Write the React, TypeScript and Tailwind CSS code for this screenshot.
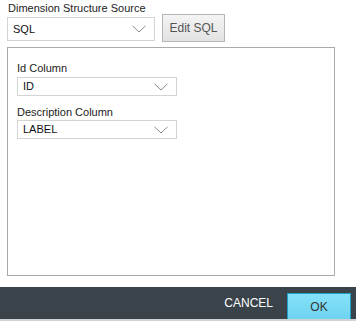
import React from "react";

function Chevron() {
  return (
    <svg width="14" height="8" viewBox="0 0 14 8" className="shrink-0">
      <path d="M0.5 0.8 L7 7 L13.5 0.8" fill="none" stroke="#8a8a8a" strokeWidth="1" />
    </svg>
  );
}

function Select({ value, className }: { value: string; className: string }) {
  return (
    <div
      className={
        "flex items-center justify-between border border-[#d4d4d4] bg-white pl-[5px] pr-[8px] text-[11px] text-[#111] " +
        className
      }
    >
      <span>{value}</span>
      <Chevron />
    </div>
  );
}

export default function App() {
  return (
    <div className="w-[356px] h-[321px] bg-white flex flex-col font-['Liberation_Sans',Arial,sans-serif] text-[#222]">
      <div className="px-[7px] pt-[2px]">
        <div className="text-[11px] leading-[12px] pl-[1px]">Dimension Structure Source</div>
        <div className="flex items-center">
          <Select value="SQL" className="w-[148px] h-[24px] mt-[2px]" />
          <div className="ml-[7px] w-[63px] h-[28px] flex items-center justify-center border border-[#b5b5b5] bg-gradient-to-b from-[#f4f4f4] to-[#e2e2e2] text-[12px] text-[#555]">
            Edit SQL
          </div>
        </div>
        <div className="mt-[5px] w-[328px] h-[229px] border border-[#aaaaaa] pl-[9px] pt-[14px]">
          <div className="text-[11px] leading-[13px]">Id Column</div>
          <Select value="ID" className="w-[160px] h-[19px] mt-[2px]" />
          <div className="text-[11px] leading-[13px] mt-[10px]">Description Column</div>
          <Select value="LABEL" className="w-[160px] h-[19px] mt-[1px]" />
        </div>
      </div>
      <div className="mt-auto">
        <div className="h-[32px] bg-[#3b434a] flex items-end justify-end pr-[5px]">
          <div className="h-full flex items-center text-white text-[12px] mr-[14px]">CANCEL</div>
          <div className="w-[64px] h-[26px] border-t border-l border-r border-[#1e9fc6] bg-gradient-to-b from-[#84e2fa] to-[#6fd3f0] flex items-center justify-center text-[12px] text-[#333]">
            OK
          </div>
        </div>
        <div className="h-[2px] bg-[#cfd3d6]" />
      </div>
    </div>
  );
}
